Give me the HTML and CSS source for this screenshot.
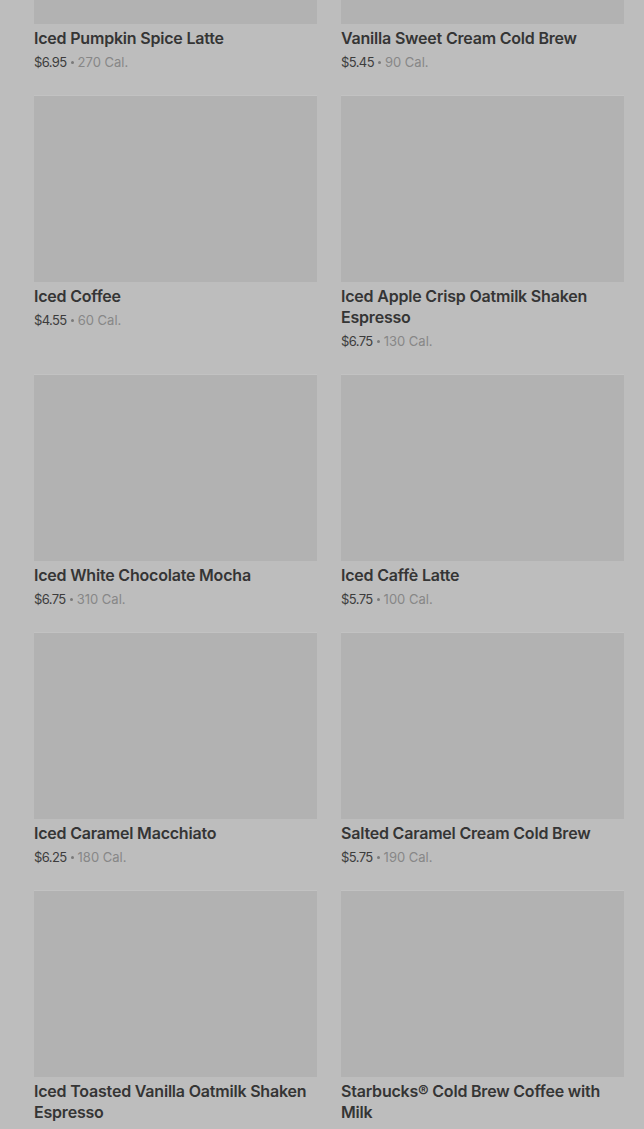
FILE: index.html
```html
<!DOCTYPE html>
<html lang="en">
<head>
<meta charset="utf-8">
<title>Menu</title>
<link rel="stylesheet" href="styles.css">
</head>
<body>
<main class="page">
  <ul class="grid">
    <li class="card"><div class="thumb"></div><h3 class="name">Iced Pumpkin Spice Latte</h3><p class="meta"><span class="price">$6.95</span><span class="dot"></span><span class="cal">270 Cal.</span></p></li>
    <li class="card"><div class="thumb"></div><h3 class="name">Vanilla Sweet Cream Cold Brew</h3><p class="meta"><span class="price">$5.45</span><span class="dot"></span><span class="cal">90 Cal.</span></p></li>
    <li class="card"><div class="thumb"></div><h3 class="name">Iced Coffee</h3><p class="meta"><span class="price">$4.55</span><span class="dot"></span><span class="cal">60 Cal.</span></p></li>
    <li class="card"><div class="thumb"></div><h3 class="name">Iced Apple Crisp Oatmilk Shaken Espresso</h3><p class="meta"><span class="price">$6.75</span><span class="dot"></span><span class="cal">130 Cal.</span></p></li>
    <li class="card"><div class="thumb"></div><h3 class="name">Iced White Chocolate Mocha</h3><p class="meta"><span class="price">$6.75</span><span class="dot"></span><span class="cal">310 Cal.</span></p></li>
    <li class="card"><div class="thumb"></div><h3 class="name">Iced Caffè Latte</h3><p class="meta"><span class="price">$5.75</span><span class="dot"></span><span class="cal">100 Cal.</span></p></li>
    <li class="card"><div class="thumb"></div><h3 class="name">Iced Caramel Macchiato</h3><p class="meta"><span class="price">$6.25</span><span class="dot"></span><span class="cal">180 Cal.</span></p></li>
    <li class="card"><div class="thumb"></div><h3 class="name">Salted Caramel Cream Cold Brew</h3><p class="meta"><span class="price">$5.75</span><span class="dot"></span><span class="cal">190 Cal.</span></p></li>
    <li class="card"><div class="thumb"></div><h3 class="name">Iced Toasted Vanilla Oatmilk Shaken Espresso</h3><p class="meta"><span class="price">$6.75</span><span class="dot"></span><span class="cal">200 Cal.</span></p></li>
    <li class="card"><div class="thumb"></div><h3 class="name">Starbucks® Cold Brew Coffee with Milk</h3><p class="meta"><span class="price">$5.45</span><span class="dot"></span><span class="cal">25 Cal.</span></p></li>
  </ul>
</main>
</body>
</html>
```

FILE: styles.css
```css
html, body {
  margin: 0;
  padding: 0;
  background: #bdbdbd;
  overflow: hidden;
}
body {
  font-family: Inter, "Noto Sans", "Liberation Sans", sans-serif;
  color: #333;
}
.page {
  padding: 0 20px 0 34px;
}
.grid {
  list-style: none;
  margin: -163px 0 0 0;
  padding: 0;
  display: grid;
  grid-template-columns: 283px 283px;
  column-gap: 24px;
  row-gap: 23px;
}
.card {
  display: flex;
  flex-direction: column;
}
.thumb {
  height: 187px;
  background: #b2b2b2;
  border-top: 1px solid #c2c2c2;
  box-sizing: border-box;
}
.name {
  margin: 4px 0 0;
  font-size: 16px;
  line-height: 20px;
  font-weight: 600;
  color: #353535;
  letter-spacing: -0.2px;
}
.name {
  line-height: 21px;
}
.meta {
  margin: 3px 0 0;
  font-size: 13px;
  line-height: 20px;
  color: #3c3c3c;
  display: flex;
  align-items: center;
}
.price {
  color: #3c3c3c;
  letter-spacing: -0.6px;
}
.dot {
  display: inline-block;
  width: 3px;
  height: 3px;
  border-radius: 50%;
  background: #7a7a7a;
  margin: 1px 4px 0 4px;
}
.cal {
  color: #878787;
}
```
